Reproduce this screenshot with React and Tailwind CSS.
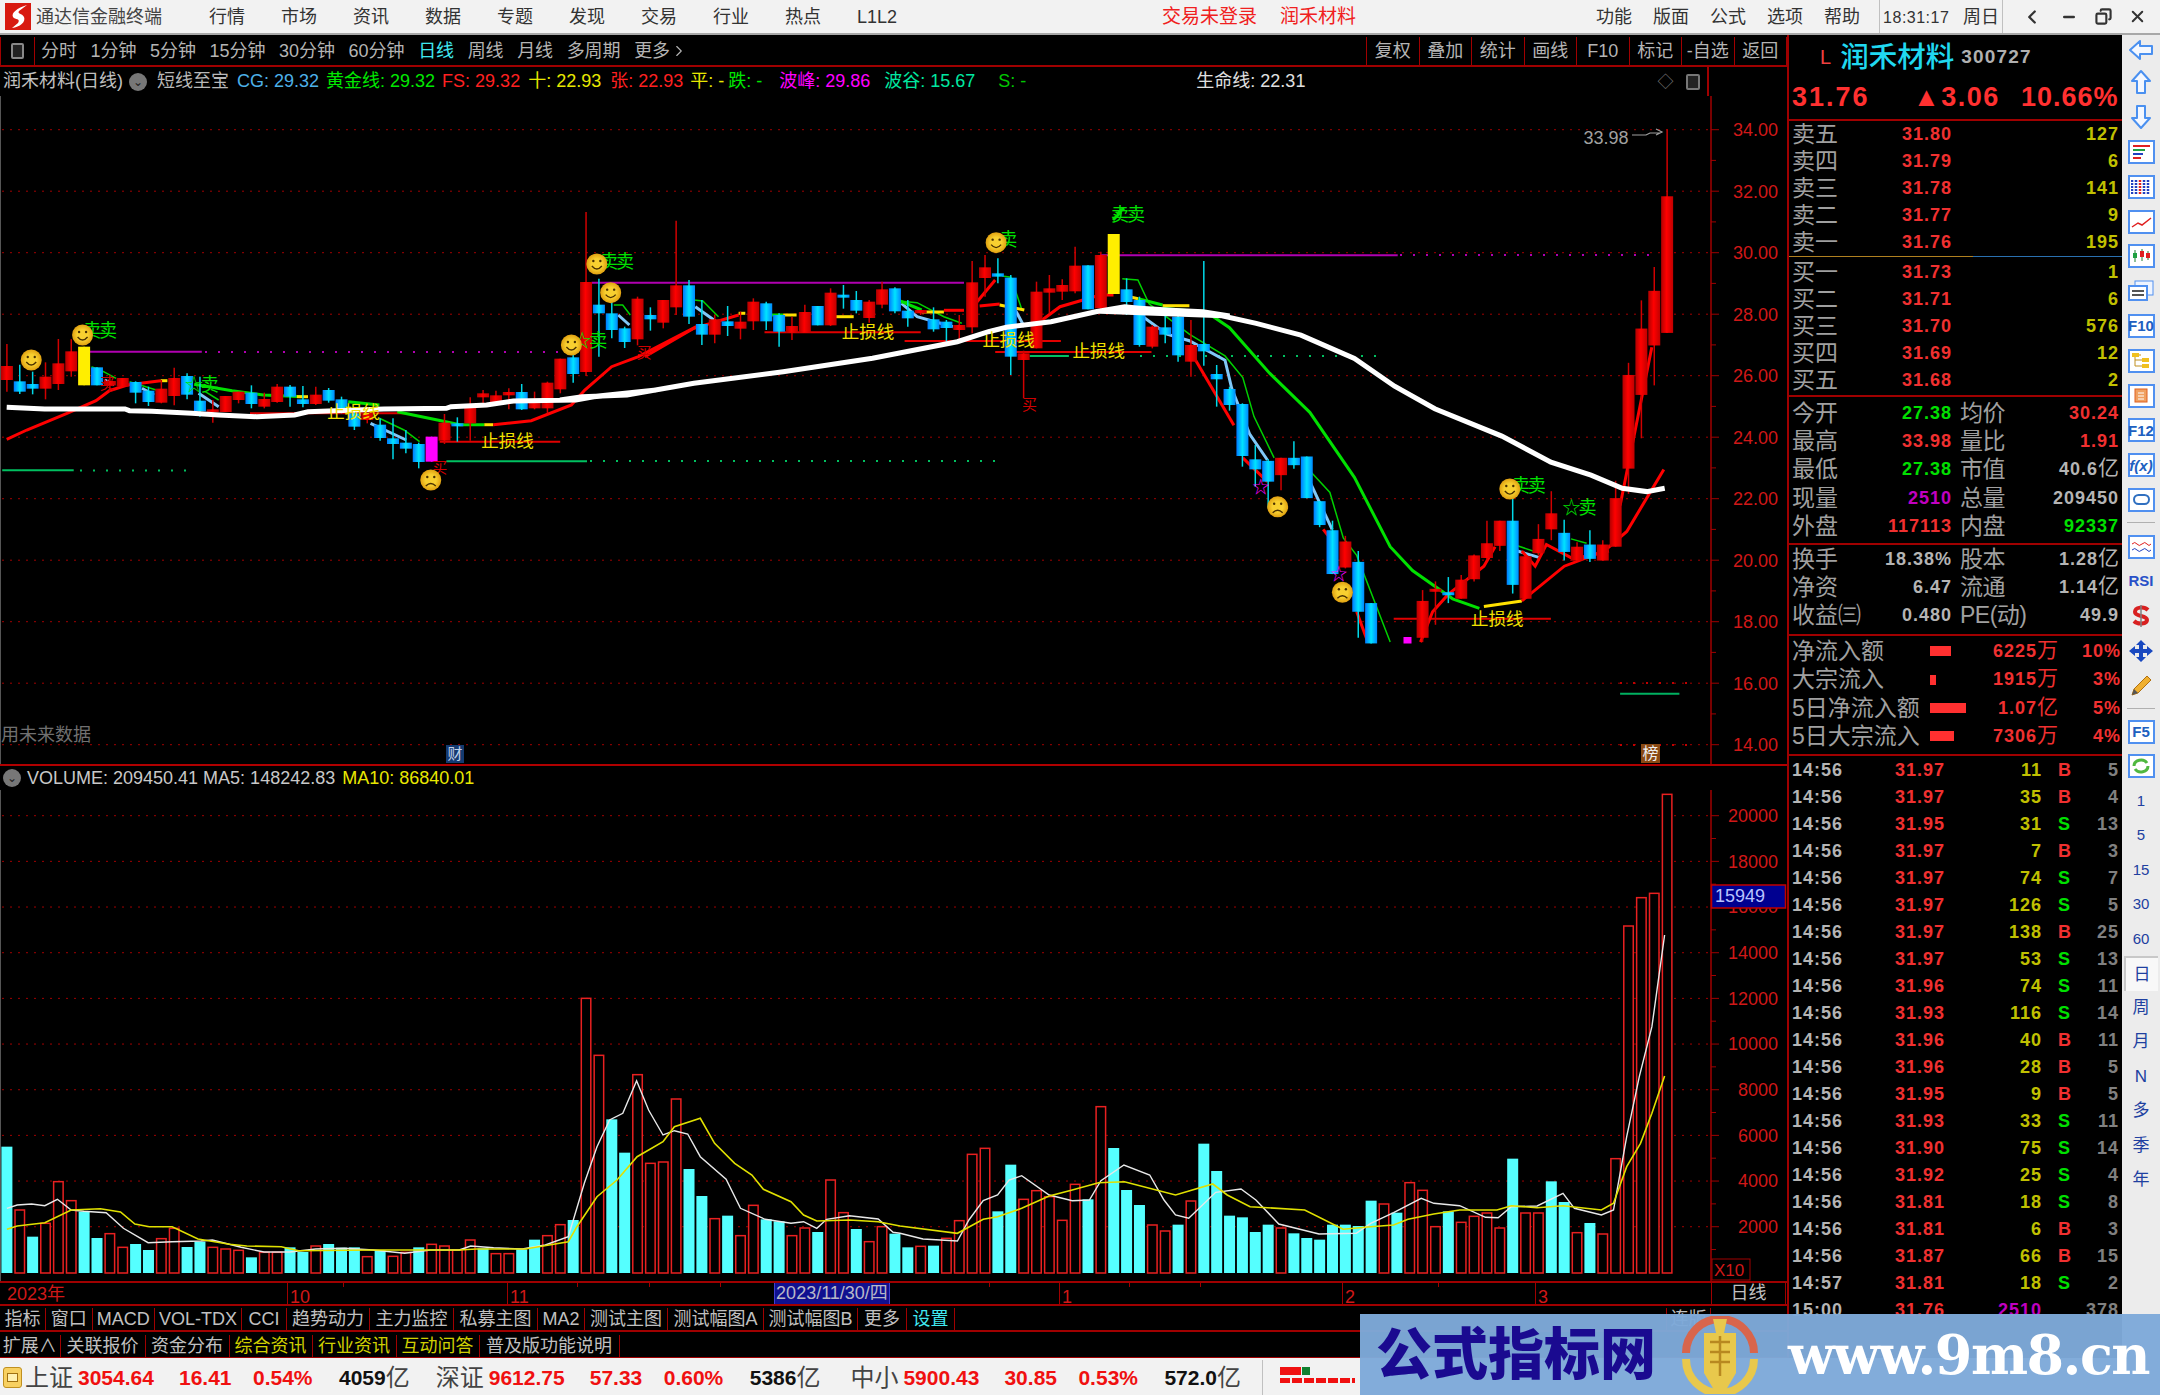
import { ChevronLeft, ChevronRight, Minus, X, Copy } from 'lucide-react';

// zoom-space helpers, the marks below were read off crops of the chart
const z3 = (a) => a.map(([x, y]) => [x * 0.4464, 200 + y / 3]);
const z4 = (a) => a.map(([x, y]) => [560 + x * 0.4464, 200 + y / 3]);
const z5 = (a) => a.map(([x, y]) => [1100 + x * 0.4464, 100 + y * 0.4337]);
const zv1 = (a) => a.map(([x, y]) => [x * 0.574, 760 + y / 3]);
const zv2 = (a) => a.map(([x, y]) => [900 + x * 0.574, 760 + y / 3]);
const pts = (a) => a.map((p) => p.map((n) => n.toFixed(1)).join(',')).join(' ');
const xOf = (i) => 6.9 + 12.87 * i;

const candles = [
  [498, 540, 432, 575, 'r'], [544, 575, 494, 582, 'b'], [552, 566, 515, 583, 'b'], [530, 566, 487, 598, 'r'],
  [490, 552, 417, 570, 'r'], [454, 514, 418, 530, 'r'], [440, 556, 440, 556, 'y'], [502, 556, 502, 556, 'b'],
  [543, 556, 525, 575, 'r'], [534, 560, 534, 560, 'r'], [546, 578, 544, 610, 'b'], [572, 606, 560, 618, 'b'],
  [566, 608, 540, 610, 'r'], [534, 588, 503, 616, 'r'], [528, 584, 520, 598, 'b'], [602, 634, 530, 650, 'b'],
  [628, 636, 600, 668, 'r'], [588, 636, 588, 636, 'r'], [575, 600, 575, 610, 'r'], [578, 612, 556, 625, 'b'],
  [597, 620, 578, 625, 'r'], [560, 606, 552, 608, 'r'], [560, 590, 555, 620, 'b'], [598, 612, 558, 622, 'b'],
  [584, 612, 560, 615, 'r'], [570, 602, 564, 608, 'b'], [598, 630, 590, 640, 'b'], [640, 680, 630, 690, 'b'],
  [640, 660, 640, 670, 'r'], [674, 714, 655, 722, 'b'], [715, 732, 655, 778, 'b'], [728, 746, 690, 760, 'b'],
  [732, 786, 728, 805, 'b'], [710, 785, 710, 785, 'm'], [668, 722, 642, 732, 'r'], [670, 678, 652, 725, 'b'],
  [614, 670, 592, 722, 'r'], [580, 592, 570, 620, 'r'], [586, 606, 572, 612, 'r'], [576, 586, 565, 628, 'r'],
  [576, 628, 552, 630, 'b'], [600, 625, 575, 628, 'r'], [548, 625, 545, 640, 'r'], [476, 568, 476, 580, 'r'],
  [472, 522, 434, 548, 'b'], [246, 516, 36, 528, 'r'], [314, 340, 236, 470, 'b'], [340, 390, 300, 415, 'b'],
  [385, 426, 380, 444, 'b'], [296, 418, 290, 436, 'r'], [345, 358, 322, 392, 'b'], [300, 368, 300, 385, 'r'],
  [256, 322, 62, 345, 'r'], [256, 350, 240, 372, 'b'], [372, 404, 300, 435, 'b'], [358, 404, 345, 430, 'r'],
  [364, 378, 318, 408, 'b'], [365, 386, 335, 418, 'r'], [305, 364, 295, 390, 'r'], [310, 364, 305, 390, 'b'],
  [345, 395, 340, 440, 'b'], [378, 398, 350, 420, 'r'], [336, 398, 314, 398, 'r'], [318, 376, 318, 376, 'b'],
  [278, 376, 265, 378, 'r'], [284, 290, 255, 326, 'b'], [300, 332, 273, 340, 'b'], [305, 354, 300, 368, 'r'],
  [268, 314, 245, 325, 'r'], [265, 334, 262, 340, 'b'], [332, 355, 300, 380, 'b'], [330, 340, 330, 345, 'r'],
  [358, 388, 322, 395, 'b'], [365, 384, 360, 425, 'b'], [375, 390, 345, 420, 'r'], [247, 382, 183, 400, 'r'],
  [202, 234, 165, 290, 'r'], [220, 230, 175, 250, 'b'], [233, 470, 225, 525, 'b'], [460, 480, 452, 595, 'r'],
  [275, 445, 245, 445, 'r'], [265, 278, 225, 340, 'r'], [255, 275, 238, 300, 'r'], [197, 274, 140, 280, 'r'],
  [196, 328, 196, 328, 'b'], [165, 325, 155, 330, 'r'], [102, 282, 102, 282, 'y'], [268, 306, 235, 345, 'b'],
  [300, 435, 290, 440, 'b'], [380, 440, 375, 445, 'r'], [382, 404, 335, 430, 'b'], [350, 466, 345, 485, 'b'],
  [435, 485, 360, 530, 'r'], [432, 454, 183, 497, 'b'], [522, 538, 495, 620, 'b'], [567, 615, 560, 632, 'b'],
  [612, 768, 610, 800, 'b'], [778, 808, 735, 860, 'b'],
].map(([t, b, wt, wb, c]) => [200 + t / 3, 200 + b / 3, 200 + wt / 3, 200 + wb / 3, c]);

const candlesLate = [
  [98, 832, 880, 828, 940, 'b'], [99, 825, 865, 825, 900, 'r'], [100, 825, 842, 787, 850, 'b'], [101, 822, 918, 822, 918, 'b'],
  [102, 925, 980, 925, 985, 'b'], [103, 992, 1093, 970, 1093, 'b'], [104, 1018, 1078, 1005, 1080, 'r'], [105, 1065, 1180, 1040, 1240, 'b'],
  [106, 1160, 1253, 1160, 1253, 'b'], [110, 1155, 1240, 1130, 1250, 'r'], [111, 1127, 1131, 1110, 1210, 'r'],
  [112, 1135, 1142, 1100, 1160, 'b'], [113, 1106, 1150, 1095, 1150, 'r'], [114, 1050, 1105, 1048, 1110, 'r'], [115, 1022, 1056, 970, 1060, 'r'],
  [116, 970, 1028, 970, 1040, 'r'], [117, 970, 1118, 920, 1138, 'b'], [118, 1052, 1150, 1052, 1150, 'r'], [119, 1012, 1045, 978, 1050, 'r'],
  [120, 953, 990, 902, 1015, 'r'], [121, 998, 1042, 968, 1062, 'b'], [122, 1030, 1062, 1020, 1062, 'r'], [123, 1025, 1058, 992, 1065, 'b'],
  [124, 1025, 1062, 1015, 1062, 'r'], [125, 918, 1030, 878, 1030, 'r'], [126, 634, 850, 606, 908, 'r'], [127, 527, 680, 462, 780, 'r'],
  [128, 440, 566, 385, 658, 'r'], [129, 222, 537, 68, 537, 'r'],
].map(([i, t, b, wt, wb, c]) => [i, 100 + t * 0.4337, 100 + b * 0.4337, 100 + wt * 0.4337, 100 + wb * 0.4337, c]);

const volumes = [
  [1160, 'c'], [1350, 'r'], [1430, 'c'], [1390, 'r'], [1265, 'r'], [1322, 'r'], [1355, 'c'], [1434, 'c'], [1421, 'r'], [1462, 'r'],
  [1452, 'c'], [1470, 'c'], [1436, 'r'], [1405, 'r'], [1461, 'c'], [1445, 'c'], [1462, 'r'], [1467, 'r'], [1471, 'r'], [1492, 'c'],
  [1477, 'r'], [1477, 'r'], [1462, 'c'], [1476, 'c'], [1458, 'r'], [1452, 'c'], [1463, 'c'], [1462, 'c'], [1490, 'r'], [1471, 'c'],
  [1489, 'r'], [1477, 'r'], [1462, 'c'], [1453, 'r'], [1458, 'r'], [1470, 'r'], [1440, 'r'], [1465, 'c'], [1481, 'r'], [1481, 'r'],
  [1468, 'c'], [1439, 'c'], [1427, 'r'], [1394, 'r'], [1380, 'c'], [715, 'r'], [886, 'r'], [1078, 'c'], [1178, 'c'], [944, 'r'],
  [1210, 'r'], [1206, 'r'], [1017, 'r'], [1227, 'c'], [1308, 'c'], [1376, 'r'], [1367, 'c'], [1427, 'r'], [1336, 'r'], [1378, 'c'],
  [1384, 'c'], [1427, 'r'], [1404, 'r'], [1416, 'c'], [1260, 'r'], [1358, 'r'], [1407, 'c'], [1445, 'r'], [1400, 'r'], [1421, 'c'],
  [1462, 'c'], [1459, 'r'], [1457, 'c'], [1435, 'r'], [1382, 'r'], [1183, 'r'], [1165, 'r'], [1354, 'c'], [1214, 'c'], [1318, 'r'],
  [1292, 'r'], [1310, 'r'], [1381, 'r'], [1273, 'r'], [1318, 'c'], [1040, 'r'], [1164, 'c'], [1290, 'c'], [1335, 'c'], [1395, 'r'],
  [1413, 'r'], [1394, 'c'], [1323, 'r'], [1151, 'c'], [1233, 'c'], [1367, 'c'], [1372, 'c'], [1416, 'c'], [1394, 'c'], [1404, 'r'],
  [1420, 'c'], [1434, 'c'], [1439, 'c'], [1394, 'c'], [1394, 'c'], [1398, 'c'], [1322, 'c'], [1332, 'r'], [1358, 'c'], [1268, 'r'],
  [1291, 'r'], [1400, 'r'], [1354, 'c'], [1387, 'r'], [1369, 'r'], [1359, 'r'], [1404, 'r'], [1196, 'c'], [1359, 'r'], [1359, 'r'],
  [1264, 'c'], [1326, 'c'], [1418, 'r'], [1389, 'c'], [1422, 'r'], [1196, 'r'], [498, 'r'], [413, 'r'], [400, 'r'], [103, 'r'],
];

const lifeLine = [
  ...z3([[15, 622], [100, 627], [280, 627], [290, 632], [340, 634], [430, 640], [490, 645], [575, 650], [660, 645], [690, 635], [860, 627], [1000, 625], [1010, 620], [1090, 615], [1150, 603], [1290, 600], [1330, 590], [1400, 582], [1470, 570]]),
  ...z4([[0, 600], [50, 590], [150, 585], [300, 550], [500, 515], [700, 475], [890, 425], [960, 395], [1000, 382], [1100, 365], [1200, 335], [1265, 320], [1320, 328], [1440, 335], [1500, 348]]),
  ...z5([[0, 487], [55, 478], [240, 490], [350, 515], [450, 542], [570, 596], [660, 660], [750, 712], [900, 775], [1010, 835], [1100, 865], [1170, 895], [1225, 903], [1265, 895]]),
];

const trend = [
  ['#ff0000', z3([[15, 718], [60, 690], [150, 640], [215, 602], [245, 572], [285, 555], [315, 550], [360, 542]])],
  ['#ffe000', z3([[360, 542], [375, 542]])],
  ['#00e000', z3([[435, 553], [520, 572], [590, 585], [680, 590]])],
  ['#ffe000', z3([[665, 590], [690, 590]])],
  ['#00e000', z3([[780, 605], [850, 615]])],
  ['#00e000', z3([[890, 635], [980, 660], [1030, 674], [1085, 674]])],
  ['#ffe000', z3([[1085, 674], [1105, 674]])],
  ['#ff0000', z3([[1105, 674], [1190, 662], [1280, 615], [1310, 570], [1370, 500], [1430, 470], [1560, 380]])],
  ['#ff0000', z4([[190, 470], [300, 385], [400, 345]])],
  ['#ffe000', z4([[400, 340], [415, 340]])],
  ['#00e000', z4([[475, 345], [500, 345]])],
  ['#ffe000', z4([[500, 345], [530, 345]])],
  ['#ffe000', z4([[618, 350], [658, 350]])],
  ['#00e000', z4([[760, 302], [810, 330]])],
  ['#ffe000', z4([[810, 336], [860, 336]])],
  ['#ff0000', z4([[860, 331], [905, 331]])],
  ['#ff0000', z4([[925, 320], [975, 240]])],
  ['#ff0000', z4([[940, 318], [985, 312]])],
  ['#ffe000', z4([[985, 315], [1040, 330]])],
  ['#ff0000', z4([[1080, 360], [1120, 320], [1210, 285], [1240, 285]])],
  ['#ffe000', z4([[1275, 290], [1295, 296]])],
  ['#00e000', z4([[1295, 296], [1350, 315]])],
  ['#ffe000', z4([[1350, 317], [1410, 317]])],
  ['#00e000', z5([[140, 480], [240, 490], [290, 525], [380, 630], [470, 720], [570, 870], [650, 1030], [700, 1085], [790, 1150], [850, 1172]])],
  ['#ffe000', z5([[860, 1168], [945, 1155]])],
  ['#ff0000', z5([[945, 1155], [1040, 1075], [1130, 1040], [1180, 995], [1263, 852]])],
  ['#ff0000', z5([[1140, 1040], [1060, 1058], [1000, 1025], [975, 1075], [945, 1040]])],
  ['#ff0000', z5([[718, 1250], [745, 1180], [780, 1140], [860, 1075], [885, 1030]])],
  ['#ff0000', z5([[1165, 935], [1207, 720], [1236, 570]])],
];

const thinGreen = [
  z3([[205, 500], [232, 515], [260, 535]]), z3([[290, 545], [350, 570]]), z3([[460, 575], [490, 600]]), z3([[850, 655], [905, 690], [940, 725]]),
  z3([[1375, 315], [1395, 315], [1412, 345]]), z4([[300, 300], [320, 303], [355, 350]]), z4([[760, 303], [800, 308], [860, 350], [900, 370]]),
  z4([[990, 228], [1010, 232], [1035, 330]]), z5([[50, 412], [85, 415], [110, 470], [200, 540], [280, 590], [320, 640], [345, 730], [390, 825]]),
  z5([[470, 855], [515, 905], [545, 1010], [575, 1050], [650, 1250]]), z5([[935, 1028], [985, 1045]]), z5([[1055, 1012], [1090, 1022]]),
];

const thinBlue = [
  z3([[235, 540], [255, 555]]), z3([[318, 565], [345, 585]]), z3([[445, 580], [490, 620]]), z3([[830, 670], [910, 720]]),
  z3([[1385, 345], [1410, 375]]), z4([[303, 320], [355, 370]]), z4([[765, 310], [800, 350], [880, 380]]), z4([[1020, 330], [1040, 380]]),
  z5([[70, 480], [150, 540], [200, 555], [280, 600], [295, 665], [335, 770], [375, 830]]), z5([[470, 880], [520, 990]]), z5([[935, 1040], [985, 1055]]),
];

const thinRed = [z5([[200, 575], [300, 750]]), z5([[320, 825], [375, 880]]), z5([[500, 990], [530, 1030]]), z5([[575, 1180], [600, 1250]])];

const hLines = [
  ['#b000b0', 2, z3([[200, 455], [452, 455]])],
  ['#b000b0', 2, [[z3([[1325, 248]])[0][0], 282.7], [z4([[905, 248]])[0][0], 282.7]]],
  ['#b000b0', 2, z5([[0, 358], [667, 358]])],
  ['#00c060', 2, z3([[5, 811], [165, 811]])],
  ['#00c060', 2, z3([[1000, 784], [1315, 784]])],
  ['#00c060', 2, z4([[1052, 468], [1140, 468]])],
  ['#00b060', 2, z5([[1165, 1369], [1298, 1369]])],
  ['#e00000', 2, z3([[985, 725], [1255, 725]])],
  ['#e00000', 2, z3([[560, 640], [910, 640]])],
  ['#e00000', 2, z4([[458, 397], [808, 397]])],
  ['#e00000', 2, z4([[772, 423], [1122, 423]])],
  ['#e00000', 2, z4([[975, 456], [1325, 456]])],
  ['#e00000', 2, z5([[658, 1196], [1010, 1196]])],
];

const dotLines = [
  ['#b000b0', 205, 565, 352],
  ['#b000b0', 1400, 1655, 255],
  ['#00c060', 80, 190, 470.5],
  ['#00c060', 590, 1000, 461],
  ['#00c060', 1140, 1385, 356],
  ['#c00000', 1620, 1690, 683],
  ['#c00000', 1620, 1690, 745],
];

const stopLabels = [...z3([[792, 655], [1137, 741]]), ...z4([[690, 413], [1005, 439], [1207, 472]]), ...z5([[890, 1211]])];
const happy = [...z3([[70, 480], [185, 405], [1280, 435], [1337, 192], [1368, 278]]), ...z4([[977, 128]]), ...z5([[918, 897]])];
const sad = [...z3([[965, 840]]), ...z5([[398, 938], [543, 1135]])];
const sellLabels = [
  ['卖卖', ...z3([[222, 410]])[0]], ['卖卖', ...z3([[1380, 205]])[0]], ['☆卖', ...z3([[1320, 442]])[0]], ['☆卖', ...z3([[450, 572]])[0]],
  ['卖', ...z4([[1002, 137]])[0]], ['卖卖', ...z4([[1270, 62]])[0]], ['卖卖', ...z5([[958, 903]])[0]], ['☆卖', ...z5([[1072, 955]])[0]],
];
const buyLabels = [...z3([[240, 568], [985, 818], [1443, 475]]), ...z4([[1052, 630]])];

const wma1 = zv1([[12, 1345], [30, 1335], [55, 1332], [78, 1337], [100, 1318], [124, 1350], [146, 1354], [185, 1358], [215, 1405], [258, 1448], [300, 1445], [350, 1443], [370, 1440], [420, 1462], [460, 1476], [505, 1476], [550, 1467], [600, 1465], [650, 1470], [705, 1480], [750, 1470], [800, 1470], [820, 1458], [860, 1463], [910, 1467], [950, 1455], [990, 1430], [1018, 1270], [1040, 1160], [1062, 1080], [1085, 1060], [1109, 962], [1130, 1050], [1155, 1125], [1175, 1112], [1198, 1122], [1220, 1190], [1265, 1258], [1290, 1345], [1333, 1378], [1378, 1390], [1400, 1385], [1423, 1405], [1440, 1378], [1480, 1367], [1530, 1377], [1556, 1417]]);
const wma2 = zv2([[0, 1420], [40, 1437], [100, 1443], [120, 1380], [145, 1322], [170, 1305], [190, 1260], [212, 1247], [260, 1305], [300, 1322], [330, 1320], [350, 1262], [390, 1215], [435, 1245], [460, 1320], [480, 1365], [503, 1375], [550, 1297], [594, 1287], [620, 1320], [660, 1392], [730, 1422], [795, 1420], [820, 1390], [860, 1358], [908, 1315], [930, 1330], [975, 1337], [1020, 1372], [1042, 1373], [1065, 1340], [1110, 1338], [1155, 1300], [1175, 1345], [1222, 1365], [1243, 1350], [1266, 1130], [1288, 950], [1310, 800], [1332, 525]]);
const yma1 = zv1([[12, 1408], [30, 1398], [78, 1388], [124, 1350], [175, 1346], [210, 1356], [235, 1392], [260, 1400], [300, 1400], [345, 1437], [400, 1453], [430, 1458], [490, 1460], [520, 1472], [650, 1470], [800, 1470], [830, 1467], [915, 1467], [990, 1445], [1005, 1400], [1040, 1310], [1075, 1260], [1110, 1190], [1155, 1145], [1175, 1100], [1220, 1075], [1245, 1150], [1280, 1210], [1310, 1245], [1330, 1288], [1378, 1325], [1400, 1365], [1423, 1383], [1480, 1380], [1530, 1385]]);
const yma2 = zv2([[0, 1398], [100, 1420], [145, 1378], [170, 1370], [212, 1345], [260, 1308], [300, 1290], [346, 1268], [391, 1265], [480, 1305], [545, 1272], [570, 1305], [610, 1340], [705, 1350], [772, 1408], [820, 1400], [860, 1395], [885, 1378], [930, 1362], [975, 1350], [1040, 1350], [1065, 1337], [1110, 1343], [1155, 1337], [1222, 1350], [1243, 1330], [1266, 1220], [1290, 1150], [1310, 1060], [1332, 948]]);

const Candle = ({ x, t, b, wt, wb, c }) => {
  const fill = { r: 'url(#upBody)', b: 'url(#downBody)', y: '#ffee00', m: '#ff00ff' }[c];
  const wick = c === 'r' ? '#d00000' : c === 'b' ? '#00d8e8' : fill;
  return (
    <g>
      <line x1={x} x2={x} y1={wt} y2={wb} stroke={wick} strokeWidth="1.5" />
      <rect x={x - 6} y={t} width="12" height={Math.max(b - t, 3)} fill={fill} />
    </g>
  );
};

const Face = ({ x, y, sad: isSad }) => (
  <g transform={`translate(${x} ${y})`}>
    <circle r="10.5" fill="url(#face)" />
    <circle cx="-3.5" cy="-3" r="1.2" fill="#4a3000" />
    <circle cx="3.5" cy="-3" r="1.2" fill="#4a3000" />
    <path d={isSad ? 'M-5 6 Q0 1 5 6' : 'M-5 2 Q0 8 5 2'} fill="none" stroke="#4a3000" strokeWidth="1.3" />
  </g>
);

const PriceChart = () => {
  const prices = [34, 32, 30, 28, 26, 24, 22, 20, 18, 16, 14];
  return (
    <svg className="block" width="1787" height="668" viewBox="0 96 1787 668">
      <defs>
        <linearGradient id="upBody">
          <stop offset="0" stopColor="#b00000" />
          <stop offset="0.45" stopColor="#ff0000" />
          <stop offset="1" stopColor="#c00000" />
        </linearGradient>
        <linearGradient id="downBody">
          <stop offset="0" stopColor="#0078ff" />
          <stop offset="0.5" stopColor="#00e4ff" />
          <stop offset="1" stopColor="#0088ff" />
        </linearGradient>
        <radialGradient id="face">
          <stop offset="0.5" stopColor="#f8d030" />
          <stop offset="1" stopColor="#e0a010" />
        </radialGradient>
      </defs>
      <line x1="0.5" x2="0.5" y1="96" y2="764" stroke="#555" />
      {prices.map((p, i) => (
        <line key={p} x1="2" x2="1711" y1={129.7 + i * 61.5} y2={129.7 + i * 61.5} stroke="#a00000" strokeDasharray="2 6" />
      ))}
      {dotLines.map(([col, a, b, y], i) => (
        <line key={i} x1={a} x2={b} y1={y} y2={y} stroke={col} strokeWidth="2" strokeDasharray="2 11" />
      ))}
      {hLines.map(([col, w, p], i) => (
        <polyline key={i} points={pts(p)} fill="none" stroke={col} strokeWidth={w} />
      ))}
      {thinGreen.map((p, i) => (
        <polyline key={i} points={pts(p)} fill="none" stroke="#00d000" strokeWidth="1.5" />
      ))}
      {thinRed.map((p, i) => (
        <polyline key={i} points={pts(p)} fill="none" stroke="#ff0000" strokeWidth="3" />
      ))}
      {thinBlue.map((p, i) => (
        <polyline key={i} points={pts(p)} fill="none" stroke="#80c8f8" strokeWidth="3" />
      ))}
      {trend.map(([col, p], i) => (
        <polyline key={i} points={pts(p)} fill="none" stroke={col} strokeWidth="3" />
      ))}
      {candles.map(([t, b, wt, wb, c], i) => (
        <Candle key={i} x={xOf(i)} t={t} b={b} wt={wt} wb={wb} c={c} />
      ))}
      {candlesLate.map(([i, t, b, wt, wb, c]) => (
        <Candle key={i} x={xOf(i)} t={t} b={b} wt={wt} wb={wb} c={c} />
      ))}
      <rect x="1403.5" y="637" width="8" height="6.5" fill="#ff00ff" />
      <polyline points={pts(lifeLine)} fill="none" stroke="#ffffff" strokeWidth="5" />
      {stopLabels.map(([x, y], i) => (
        <text key={i} x={x} y={y} fill="#f0e000" fontSize="17.5" textAnchor="middle">止损线</text>
      ))}
      {sellLabels.map(([s, x, y], i) => (
        <text key={i} x={x} y={y} fill="#00e000" fontSize="18" letterSpacing="-2" textAnchor="middle">{s}</text>
      ))}
      {buyLabels.map(([x, y], i) => (
        <text key={i} x={x} y={y} fill="#d00000" fontSize="15" textAnchor="middle">买</text>
      ))}
      {z5([[360, 893], [535, 1092]]).map(([x, y], i) => (
        <text key={i} x={x} y={y + 6} fill="#ff00ff" fontSize="17" textAnchor="middle">☆</text>
      ))}
      {happy.map(([x, y], i) => <Face key={i} x={x} y={y} />)}
      {sad.map(([x, y], i) => <Face key={i} x={x} y={y} sad />)}
      <path d="M1117 214 l7 -6 M1113 220 l8 -8" stroke="#00e000" strokeWidth="3" />
      <text x="1606" y="144" fill="#a0a0a0" fontSize="18" textAnchor="middle">33.98</text>
      <path d="M1632 135 h14 l4 -2 h10 M1656 129 l6 3 l-6 3" fill="none" stroke="#a0a0a0" strokeWidth="1.2" />
      <text x="1" y="741" fill="#707070" fontSize="18">用未来数据</text>
      <rect x="446" y="745" width="18" height="18" fill="#143a70" />
      <text x="455" y="759" fill="#c0d0e8" fontSize="15" textAnchor="middle">财</text>
      <rect x="1641" y="744" width="19" height="19" fill="#8a4a14" />
      <text x="1650.5" y="759" fill="#f0f0f0" fontSize="16" textAnchor="middle">榜</text>
      <line x1="1711" x2="1711" y1="96" y2="764" stroke="#a00000" strokeWidth="1.5" />
      {prices.map((p, i) => (
        <g key={p}>
          <line x1="1711" x2="1719" y1={129.7 + i * 61.5} y2={129.7 + i * 61.5} stroke="#a00000" />
          {i < 10 && <line x1="1711" x2="1716" y1={160.4 + i * 61.5} y2={160.4 + i * 61.5} stroke="#a00000" />}
          <text x="1778" y={136 + i * 61.5} fill="#d01818" fontSize="18" textAnchor="end">{p.toFixed(2)}</text>
        </g>
      ))}
    </svg>
  );
};

const VolumeChart = () => {
  const levels = [20000, 18000, 16000, 14000, 12000, 10000, 8000, 6000, 4000, 2000];
  return (
    <svg className="block" width="1787" height="491" viewBox="0 790 1787 491">
      <line x1="0.5" x2="0.5" y1="790" y2="1281" stroke="#555" />
      {levels.map((v, i) => (
        <line key={v} x1="2" x2="1711" y1={815.7 + i * 45.67} y2={815.7 + i * 45.67} stroke="#a00000" strokeDasharray="2 6" />
      ))}
      {volumes.map(([top, c], i) => {
        const y = 760 + top / 3;
        const x = xOf(i);
        return c === 'c' ? (
          <rect key={i} x={x - 5.5} y={y} width="11" height={1273 - y} fill="#55ffff" />
        ) : (
          <rect key={i} x={x - 4.75} y={y} width="9.5" height={1273 - y} fill="#000" stroke="#e82020" strokeWidth="1.5" />
        );
      })}
      <polyline points={pts([...wma1, ...wma2])} fill="none" stroke="#e8e8e8" strokeWidth="1.4" />
      <polyline points={pts([...yma1, ...yma2])} fill="none" stroke="#e0e000" strokeWidth="1.6" />
      <line x1="1711" x2="1711" y1="790" y2="1281" stroke="#a00000" strokeWidth="1.5" />
      {levels.map((v, i) => (
        <g key={v}>
          <line x1="1711" x2="1719" y1={815.7 + i * 45.67} y2={815.7 + i * 45.67} stroke="#a00000" />
          <line x1="1711" x2="1716" y1={838.5 + i * 45.67} y2={838.5 + i * 45.67} stroke="#a00000" />
          <text x="1778" y={822 + i * 45.67} fill="#d01818" fontSize="18" textAnchor="end">{v}</text>
        </g>
      ))}
      <rect x="1711.5" y="885" width="74" height="23" fill="#000090" stroke="#c00000" strokeWidth="1.5" />
      <text x="1715" y="902" fill="#b8c4ff" fontSize="18">15949</text>
      <rect x="1712" y="1259" width="38" height="21" fill="#000" stroke="#a00000" />
      <text x="1714" y="1276" fill="#d01818" fontSize="17">X10</text>
    </svg>
  );
};

const TitleBar = () => (
  <div className="flex h-[35px] items-center border-b-2 border-[#a8a8a8] bg-[#f2f2f2] pl-[5px] text-[18px] text-[#333]">
    <svg width="26" height="27" viewBox="0 0 26 27">
      <rect width="26" height="27" fill="#d81a10" />
      <path d="M22 2 C12 5 6 10 8 14 C10 17 16 15 13 20 L7 25 C15 24 21 19 19 14 C17 10 12 11 14 8 Z" fill="#fff" />
    </svg>
    <span className="ml-[5px] pt-[2px] text-[#444]">通达信金融终端</span>
    <div className="ml-[47px] flex gap-[36px] pt-[2px]">
      {['行情', '市场', '资讯', '数据', '专题', '发现', '交易', '行业', '热点', 'L1L2'].map((m) => (
        <span key={m}>{m}</span>
      ))}
    </div>
    <span className="ml-[265px] pt-[2px] text-[19px] text-[#f02020]">交易未登录</span>
    <span className="ml-[23px] pt-[2px] text-[19px] text-[#f02020]">润禾材料</span>
    <div className="ml-[240px] flex gap-[21px] pt-[2px]">
      {['功能', '版面', '公式', '选项', '帮助'].map((m) => (
        <span key={m}>{m}</span>
      ))}
    </div>
    <div className="ml-[19px] flex h-full items-center border-x border-[#c0c0c0] pl-[3px] pr-[3px] pt-[2px]">
      <span className="w-[80px] text-[16px] tracking-[0.5px]">18:31:17</span>
      <span className="text-[18px]">周日</span>
    </div>
    <ChevronLeft className="ml-[18px] text-[#333]" size={22} strokeWidth={2.5} />
    <Minus className="ml-[18px] text-[#333]" size={16} strokeWidth={4} />
    <Copy className="ml-[18px] scale-x-[-1] text-[#333]" size={17} strokeWidth={3} />
    <X className="ml-[16px] text-[#333]" size={19} strokeWidth={2.5} />
  </div>
);

const ToolBar = () => (
  <div className="flex h-[32px] items-center border-b-2 border-[#a00000] pt-[2px] text-[18px] text-[#b4b4b4]">
    <div className="flex h-full w-[35px] items-center justify-center border-x border-[#a00000]">
      <div className="h-[16px] w-[13px] rounded-[2px] border-2 border-[#888] bg-[#222]" />
    </div>
    <div className="ml-[6px] flex gap-[13.5px] whitespace-nowrap">
      <span>分时</span>
      <span>1分钟</span>
      <span>5分钟</span>
      <span>15分钟</span>
      <span>30分钟</span>
      <span>60分钟</span>
      <span className="text-[#40e8f0]">日线</span>
      <span>周线</span>
      <span>月线</span>
      <span>多周期</span>
      <span className="flex items-center">更多<ChevronRight size={18} strokeWidth={1.5} /></span>
    </div>
    <div className="ml-auto flex h-full">
      {['复权', '叠加', '统计', '画线', 'F10', '标记', '-自选', '返回'].map((b) => (
        <div key={b} className="flex w-[52.5px] items-center justify-center border-l border-[#a00000] whitespace-nowrap">{b}</div>
      ))}
    </div>
    <div className="h-full w-px bg-[#a00000]" />
  </div>
);

const indicatorRow = [
  ['短线至宝', 'ml-[10px] text-[#b8b8b8]'],
  ['CG: 29.32', 'ml-[8px] text-[#4db0e8]'],
  ['黄金线: 29.32', 'ml-[7px] text-[#00e800]'],
  ['FS: 29.32', 'ml-[7px] text-[#ff2020]'],
  ['十: 22.93', 'ml-[8px] text-[#e8e800]'],
  ['张: 22.93', 'ml-[9px] text-[#ff2020]'],
  ['平: -', 'ml-[7px] text-[#e8e800]'],
  ['跌: -', 'ml-[4px] text-[#00e800]'],
  ['波峰: 29.86', 'ml-[17px] text-[#ff00ff]'],
  ['波谷: 15.67', 'ml-[14px] text-[#00e8a0]'],
  ['S: -', 'ml-[23px] text-[#00c800]'],
];

const InfoRow = () => (
  <div className="flex h-[29px] items-center whitespace-nowrap pl-[3px] text-[18px] text-[#c0c0c0]">
    <span>润禾材料(日线)</span>
    <span className="ml-[6px] flex h-[18px] w-[18px] items-center justify-center rounded-full bg-[#777] text-[12px] text-[#222]">⌄</span>
    {indicatorRow.map(([t, c]) => (
      <span key={t} className={c}>{t}</span>
    ))}
    <span className="ml-[170px] text-[#e0e0e0]">生命线: 22.31</span>
    <span className="ml-[352px] text-[16px] text-[#777]">◇</span>
    <div className="ml-[13px] h-[16px] w-[14px] rounded-[2px] border-2 border-[#777] bg-[#222]" />
    <div className="ml-[7px] h-full border-l-2 border-[#a00000]" />
  </div>
);

const dateTicks = ['left-[343px]', 'left-[577px]', 'left-[649px]', 'left-[720px]', 'left-[989px]', 'left-[1129px]', 'left-[1200px]', 'left-[1438px]'];

const DateStrip = () => (
  <div className="relative flex h-[25px] items-center border-y-2 border-[#a00000] text-[18px] text-[#d01818]">
    <span className="w-[287px] pl-[7px] pt-[2px]">2023年</span>
    <span className="h-full w-[220px] border-l border-[#a00000] pl-[2px] pt-[1px]">10</span>
    <span className="h-full w-[267px] border-l border-[#a00000] pl-[2px] pt-[1px]">11</span>
    <span className="flex h-full w-[116px] items-center justify-center border-x border-[#4040d0] bg-[#101090] text-[#b8b8c8]">2023/11/30/四</span>
    <span className="h-full w-[169px] pl-[169px]" />
    <span className="h-full w-[283px] border-l border-[#a00000] pl-[2px] pt-[1px]">1</span>
    <span className="h-full w-[193px] border-l border-[#a00000] pl-[2px] pt-[1px]">2</span>
    <span className="h-full w-[176px] border-l border-[#a00000] pl-[2px] pt-[1px]">3</span>
    <span className="flex h-full w-[75px] items-center justify-center border-x border-[#a00000] text-[#c0c0c0]">日线</span>
    {dateTicks.map((t) => (
      <span key={t} className={`absolute top-0 h-[4px] w-px bg-[#a00000] ${t}`} />
    ))}
  </div>
);

const tabsOne = [
  ['指标', 'w-[46px]'], ['窗口', 'w-[46.5px]'], ['MACD', 'w-[62.5px]'], ['VOL-TDX', 'w-[87px]'], ['CCI', 'w-[45px]'], ['趋势动力', 'w-[83px]'],
  ['主力监控', 'w-[84px]'], ['私募主图', 'w-[84px]'], ['MA2', 'w-[47px]'], ['测试主图', 'w-[83px]'], ['测试幅图A', 'w-[96px]'], ['测试幅图B', 'w-[94px]'],
  ['更多', 'w-[49px]'], ['设置', 'w-[48px] text-[#40e8f0]'],
];
const tabsTwo = [
  ['扩展∧', 'w-[60.5px]'], ['关联报价', 'w-[85px]'], ['资金分布', 'w-[84px]'], ['综合资讯', 'w-[83px] text-[#d0d000]'], ['行业资讯', 'w-[84px] text-[#d0d000]'],
  ['互动问答', 'w-[83px] text-[#d0d000]'], ['普及版功能说明', 'w-[140px]'],
];

const TabRow = ({ items, extra, className }) => (
  <div className={`flex items-center border-b-2 border-[#a00000] text-[18px] text-[#c0c0c0] ${className}`}>
    {items.map(([t, c]) => (
      <div key={t} className={`flex h-full shrink-0 items-center justify-center whitespace-nowrap border-r border-[#a00000] ${c}`}>{t}</div>
    ))}
    {extra}
  </div>
);

const Bold = ({ className = '', children }) => (
  <span className={`text-[18px] font-bold tracking-[1px] ${className}`}>{children}</span>
);

const sells = [['卖五', '31.80', '127'], ['卖四', '31.79', '6'], ['卖三', '31.78', '141'], ['卖二', '31.77', '9'], ['卖一', '31.76', '195']];
const buys = [['买一', '31.73', '1'], ['买二', '31.71', '6'], ['买三', '31.70', '576'], ['买四', '31.69', '12'], ['买五', '31.68', '2']];
const RED = 'text-[#f03030]';
const GREEN = 'text-[#00e000]';
const GRAY = 'text-[#b4b4b4]';

const QuoteRow = ({ label, price, qty }) => (
  <div className="flex h-[27px] items-center">
    <span className="w-[58px] pl-[3px] text-[23px] leading-none text-[#a0a0a0]">{label}</span>
    <Bold className={`w-[105px] text-right ${RED}`}>{price}</Bold>
    <Bold className="w-[167px] text-right text-[#c0c000]">{qty}</Bold>
  </div>
);

const stats = [
  ['今开', '27.38', GREEN, '均价', '30.24', RED], ['最高', '33.98', RED, '量比', '1.91', RED], ['最低', '27.38', GREEN, '市值', '40.6', GRAY, '亿'],
  ['现量', '2510', 'text-[#c000c0]', '总量', '209450', GRAY], ['外盘', '117113', RED, '内盘', '92337', GREEN],
];
const stats2 = [['换手', '18.38%', GRAY, '股本', '1.28', GRAY, '亿'], ['净资', '6.47', GRAY, '流通', '1.14', GRAY, '亿'], ['收益㈢', '0.480', GRAY, 'PE(动)', '49.9', GRAY]];

const StatRow = ({ row }) => {
  const [a, v, c, b, w, d, unit] = row;
  return (
    <div className="flex h-[28.4px] items-center whitespace-nowrap text-[#a0a0a0]">
      <span className="w-[58px] pl-[3px] text-[23px] leading-none">{a}</span>
      <Bold className={`w-[105px] text-right ${c}`}>{v}</Bold>
      <span className="ml-[8px] w-[50px] text-[23px] leading-none tracking-[-0.5px]">{b}</span>
      <span className={`w-[109px] text-right ${d}`}>
        <Bold>{w}</Bold>
        {unit && <span className="text-[21px] font-normal leading-none">{unit}</span>}
      </span>
    </div>
  );
};

const flows = [
  ['净流入额', 'w-[21px]', '6225', '万', '10%'], ['大宗流入', 'w-[6px]', '1915', '万', '3%'],
  ['5日净流入额', 'w-[36px]', '1.07', '亿', '5%'], ['5日大宗流入', 'w-[24px]', '7306', '万', '4%'],
];

const trades = [
  ['14:56', '31.97', '11', 'B', '5'], ['14:56', '31.97', '35', 'B', '4'], ['14:56', '31.95', '31', 'S', '13'], ['14:56', '31.97', '7', 'B', '3'],
  ['14:56', '31.97', '74', 'S', '7'], ['14:56', '31.97', '126', 'S', '5'], ['14:56', '31.97', '138', 'B', '25'], ['14:56', '31.97', '53', 'S', '13'],
  ['14:56', '31.96', '74', 'S', '11'], ['14:56', '31.93', '116', 'S', '14'], ['14:56', '31.96', '40', 'B', '11'], ['14:56', '31.96', '28', 'B', '5'],
  ['14:56', '31.95', '9', 'B', '5'], ['14:56', '31.93', '33', 'S', '11'], ['14:56', '31.90', '75', 'S', '14'], ['14:56', '31.92', '25', 'S', '4'],
  ['14:56', '31.81', '18', 'S', '8'], ['14:56', '31.81', '6', 'B', '3'], ['14:56', '31.87', '66', 'B', '15'], ['14:57', '31.81', '18', 'S', '2'],
  ['15:00', '31.76', '2510', '', '378'],
];

const Rule = () => <div className="h-[2px] bg-[#a00000]" />;

const QuotePanel = () => (
  <div className="w-[335px] shrink-0 overflow-hidden border-l-2 border-[#a00000]">
    <div className="flex h-[39px] items-center pt-[5px]">
      <span className="ml-[31px] text-[20px] text-[#f04040]">L</span>
      <span className="ml-[9px] text-[28.5px] font-medium leading-none text-[#20d8f0]">润禾材料</span>
      <span className="ml-[7px] text-[19px] font-bold tracking-[1.2px] text-[#b0b0b0]">300727</span>
    </div>
    <div className="flex h-[45px] items-center pt-[2px] font-bold text-[#ff3030]">
      <span className="ml-[3px] w-[121px] text-[27px] tracking-[2px]">31.76</span>
      <span className="w-[108px] whitespace-nowrap text-[27px] tracking-[1.5px]"><span className="text-[27px]">▲</span>3.06</span>
      <span className="text-[27px] tracking-[1px]">10.66%</span>
    </div>
    <Rule />
    {sells.map(([l, p, q]) => <QuoteRow key={l} label={l} price={p} qty={q} />)}
    <div className="flex h-px">
      <div className="w-[184px] bg-[#b08020]" />
      <div className="flex-1 bg-[#2a70b0]" />
    </div>
    <div className="h-[2px]" />
    {buys.map(([l, p, q]) => <QuoteRow key={l} label={l} price={p} qty={q} />)}
    <div className="h-px" />
    <Rule />
    <div className="h-[2px]" />
    {stats.map((r) => <StatRow key={r[0]} row={r} />)}
    <div className="h-[2px]" />
    <Rule />
    {stats2.map((r) => <StatRow key={r[0]} row={r} />)}
    <div className="h-[4px]" />
    <Rule />
    <div className="pt-px">
      {flows.map(([l, bar, v, u, pct]) => (
        <div key={l} className="flex h-[28.4px] items-center whitespace-nowrap">
          <span className="w-[141px] pl-[3px] text-[23px] leading-none text-[#a0a0a0]">{l}</span>
          <div className="w-[60px]"><div className={`h-[10px] bg-[#ff3030] ${bar}`} /></div>
          <span className={`w-[68px] text-right ${RED}`}>
            <Bold>{v}</Bold>
            <span className="text-[21px] leading-none">{u}</span>
          </span>
          <Bold className={`w-[63px] text-right ${RED}`}>{pct}</Bold>
        </div>
      ))}
    </div>
    <div className="h-[3px]" />
    <Rule />
    <div className="pt-[1px]">
      {trades.map(([t, p, q, s, n], i) => (
        <div key={i} className="flex h-[27px] items-center">
          <Bold className={`w-[106px] pl-[3px] ${GRAY}`}>{t}</Bold>
          <Bold className={`w-[62px] ${RED}`}>{p}</Bold>
          <Bold className={`w-[85px] text-right ${q === '2510' ? 'text-[#c000c0]' : 'text-[#c0c000]'}`}>{q}</Bold>
          <Bold className={`ml-[16px] w-[22px] ${s === 'B' ? 'text-[#f03030]' : GREEN}`}>{s}</Bold>
          <Bold className="w-[39px] text-right text-[#808080]">{n}</Bold>
        </div>
      ))}
    </div>
  </div>
);

const ArrowIcon = ({ rotate }) => (
  <svg width="26" height="24" viewBox="0 0 26 24" className={rotate}>
    <path d="M2 12 L12 3 V8 H24 V16 H12 V21 Z" fill="#f4f8ff" stroke="#4a90f0" strokeWidth="2" strokeLinejoin="round" />
  </svg>
);

const IconBox = ({ children }) => (
  <div className="flex h-[24px] w-[27px] items-center justify-center border-2 border-[#5090f0] bg-white">{children}</div>
);

const Bars = ({ rows }) => (
  <svg width="19" height="16" viewBox="0 0 19 16">
    {rows.map(([c, y, w], i) => (
      <rect key={i} x="1" y={y} width={w} height="2" fill={c} />
    ))}
  </svg>
);

const TinyText = ({ children, className = '' }) => (
  <span className={`text-[15px] font-bold leading-none text-[#2060c0] ${className}`}>{children}</span>
);

const sideIcons = [
  <ArrowIcon key="l" />,
  <ArrowIcon key="u" rotate="rotate-90" />,
  <ArrowIcon key="d" rotate="-rotate-90" />,
  <IconBox key="a"><Bars rows={[['#e02020', 1, 17], ['#20a040', 5, 12], ['#2040c0', 9, 10], ['#e02020', 13, 8]]} /></IconBox>,
  <IconBox key="b"><svg width="20" height="16" viewBox="0 0 20 16">{[1, 5, 9, 13, 17].map((x) => <path key={x} d={`M${x} 1 v14`} stroke={x % 3 ? '#2040c0' : '#e02020'} strokeWidth="2.5" strokeDasharray="2 1" />)}</svg></IconBox>,
  <IconBox key="c"><svg width="21" height="16" viewBox="0 0 21 16"><path d="M1 13 L7 9 L11 11 L20 4" fill="none" stroke="#e02020" strokeWidth="1.5" /></svg></IconBox>,
  <IconBox key="d2"><svg width="21" height="16" viewBox="0 0 21 16"><path d="M4 2v12M11 1v12M17 3v9" stroke="#208030" /><rect x="2" y="5" width="4" height="5" fill="#20a040" /><rect x="9" y="3" width="4" height="6" fill="#e02020" /><rect x="15" y="5" width="4" height="5" fill="#e02020" /></svg></IconBox>,
  <svg key="e" width="26" height="22" viewBox="0 0 26 22"><rect x="7" y="1" width="18" height="14" fill="#eef4ff" stroke="#5090f0" /><rect x="1" y="6" width="18" height="14" fill="#fff" stroke="#5090f0" strokeWidth="2" /><path d="M4 11 h12 M4 15 h12" stroke="#555" strokeWidth="2" /></svg>,
  <IconBox key="f"><TinyText>F10</TinyText></IconBox>,
  <IconBox key="g"><svg width="20" height="17" viewBox="0 0 20 17"><path d="M2 3 h8 M4 3 v11 h8 M4 8 h8" fill="none" stroke="#c09020" /><rect x="1" y="1" width="7" height="4" fill="#f0c020" /><rect x="11" y="6" width="7" height="4" fill="#f0c020" /><rect x="11" y="12" width="7" height="4" fill="#f0c020" /></svg></IconBox>,
  <IconBox key="h"><svg width="16" height="17" viewBox="0 0 16 17"><rect x="2" y="2" width="12" height="13" fill="#f0a060" stroke="#e06020" /><path d="M5 6 h6 M5 9 h6 M5 12 h6" stroke="#fff" /></svg></IconBox>,
  <IconBox key="i"><TinyText>F12</TinyText></IconBox>,
  <IconBox key="j"><TinyText className="italic">f(x)</TinyText></IconBox>,
  <IconBox key="k"><div className="h-[11px] w-[17px] rounded-full border-2 border-[#3070c0]" /></IconBox>,
];

const sideIconsTwo = [
  <IconBox key="a"><svg width="21" height="14" viewBox="0 0 21 14"><path d="M1 4 q3 -3 5 0 t5 0 t5 0 t4 0" fill="none" stroke="#e02020" /><path d="M1 10 q3 -3 5 0 t5 0 t5 0 t4 0" fill="none" stroke="#2040c0" /></svg></IconBox>,
  <span key="b" className="text-[15px] font-bold text-[#2850c8]">RSI</span>,
  <svg key="c" width="22" height="24" viewBox="0 0 22 24"><path d="M18 6 C14 2 5 3 5 8 C5 13 17 11 17 16 C17 20 8 21 4 17" fill="none" stroke="#d82020" strokeWidth="4" /><path d="M11 1 v22" stroke="#808080" strokeWidth="1.5" /></svg>,
  <svg key="d" width="26" height="24" viewBox="0 0 26 24"><path d="M13 1 l5 5 h-3 v4 h4 v-3 l6 5 l-6 5 v-3 h-4 v4 h3 l-5 5 l-5 -5 h3 v-4 h-4 v3 l-6 -5 l6 -5 v3 h4 v-4 h-3 z" fill="#1848c0" /></svg>,
  <svg key="e" width="24" height="24" viewBox="0 0 24 24"><path d="M3 21 l2 -6 L18 2 l4 4 L9 19 Z" fill="#f0b030" stroke="#b07010" /><path d="M3 21 l2 -6 l4 4 Z" fill="#555" /></svg>,
];

const SideBar = () => (
  <div className="flex w-[38px] shrink-0 flex-col items-center bg-[#ececec]">
    {sideIcons.map((ic, i) => (
      <div key={i} className={`flex w-full items-center justify-center ${i === 0 ? 'h-[30px]' : 'h-[34.8px]'}`}>{ic}</div>
    ))}
    <div className="mb-[6px] mt-[5px] h-px w-[28px] bg-[#b0b0b0]" />
    {sideIconsTwo.map((ic, i) => (
      <div key={i} className="flex h-[34.8px] w-full items-center justify-center">{ic}</div>
    ))}
    <div className="mb-[5px] mt-[5px] h-px w-[28px] bg-[#b0b0b0]" />
    <div className="flex h-[34.6px] w-full items-center justify-center"><IconBox><TinyText>F5</TinyText></IconBox></div>
    <div className="flex h-[34.6px] w-full items-center justify-center">
      <IconBox><svg width="20" height="16" viewBox="0 0 20 16"><path d="M3 8 a7 6 0 0 1 13 -3 M17 8 a7 6 0 0 1 -13 3" fill="none" stroke="#50b840" strokeWidth="3" /></svg></IconBox>
    </div>
    {['1', '5', '15', '30', '60'].map((n) => (
      <div key={n} className="flex h-[34.5px] w-full items-center justify-center text-[15px] font-medium text-[#2040a0]">{n}</div>
    ))}
    <div className="flex h-[34.5px] w-[34px] items-center justify-center border-l-2 border-t-2 border-[#c8c8c8] bg-[#f8f8f8] text-[17px] text-[#2040a0]">日</div>
    {['周', '月', 'N', '多', '季', '年'].map((n) => (
      <div key={n} className="flex h-[34.4px] w-full items-center justify-center text-[17px] text-[#2040a0]">{n}</div>
    ))}
  </div>
);

const indexes = [
  ['上证', '3054.64', '16.41', '0.54%', '4059'],
  ['深证', '9612.75', '57.33', '0.60%', '5386'],
  ['中小', '5900.43', '30.85', '0.53%', '572.0'],
];

const StatusBar = () => (
  <div className="flex h-[37px] items-center bg-[#f2f2f2] pl-[3px] pt-[2px] text-[21px]">
    <div className="flex h-[21px] w-[19px] items-center justify-center rounded-[3px] border border-[#c09020] bg-[#f8d060]">
      <div className="h-[9px] w-[11px] border border-[#a07010] bg-[#fff0b0]" />
    </div>
    {indexes.map(([n, a, b, c, d], i) => (
      <div key={n} className={`flex items-center whitespace-nowrap ${i === 0 ? 'ml-[3px]' : i === 1 ? 'ml-[26px]' : 'ml-[30px]'}`}>
        <span className="w-[53px] text-[24px] leading-none text-[#444]">{n}</span>
        <span className="w-[101px] font-bold text-[#f01010]">{a}</span>
        <span className="w-[74px] font-bold text-[#f01010]">{b}</span>
        <span className="w-[86px] font-bold text-[#f01010]">{c}</span>
        <span className="font-bold text-[#111]">{d}</span>
        <span className="text-[24px] leading-none text-[#444]">亿</span>
      </div>
    ))}
    <div className="ml-[21px] h-full border-l border-[#c0c0c0] pl-[17px] pt-[7px]">
      <div className="flex gap-px">
        <div className="h-[8px] w-[21px] bg-[#f01010]" />
        <div className="h-[8px] w-[8px] bg-[#108030]" />
      </div>
      <div className="mt-[3px] h-[5px] w-[75px] bg-[repeating-linear-gradient(90deg,#f01010_0,#f01010_10px,#f2f2f2_10px,#f2f2f2_12px)]" />
    </div>
  </div>
);

const Watermark = () => (
  <div className="absolute bottom-0 right-0 flex h-[81px] w-[800px] items-center bg-[#7ea9d9]/97">
    <span className="ml-[16px] shrink-0 whitespace-nowrap text-[56px] font-black leading-none text-[#1a0a90]">公式指标网</span>
    <svg className="ml-[23px] shrink-0" width="82" height="78" viewBox="0 0 82 78">
      <path d="M7 37 A34 34 0 0 1 75 37" fill="none" stroke="#d8654c" strokeWidth="8" />
      <path d="M7 43 A34 34 0 0 0 75 43" fill="none" stroke="#e8c84c" strokeWidth="8" />
      <path d="M34 3 h14 l-3 14 h12 v40 l-10 17 h-12 l-10 -17 v-40 h12 z" fill="#e8c84c" />
      <path d="M31 26 h20 M31 36 h20 M31 46 h20 M41 20 v40" stroke="#b88820" strokeWidth="2.5" />
    </svg>
    <span className="ml-[27px] shrink-0 whitespace-nowrap font-['DejaVu_Serif',serif] text-[54px] font-bold leading-none tracking-[-1.5px] text-white">www.9m8.cn</span>
  </div>
);

export default function App() {
  return (
    <div className="relative flex h-[1395px] w-[2160px] flex-col overflow-hidden bg-black font-['Liberation_Sans','Noto_Sans_CJK_SC',sans-serif]">
      <TitleBar />
      <div className="flex h-[1323px] overflow-hidden">
        <div className="w-[1787px] shrink-0">
          <ToolBar />
          <InfoRow />
          <PriceChart />
          <div className="h-[2px] bg-[#b00000]" />
          <div className="flex h-[24px] items-center whitespace-nowrap pl-[3px] text-[18px] text-[#c8c8c8]">
            <span className="mr-[6px] flex h-[18px] w-[18px] items-center justify-center rounded-full bg-[#777] text-[12px] text-[#222]">⌄</span>
            <span>VOLUME: 209450.41</span>
            <span className="ml-[5px]">MA5: 148242.83</span>
            <span className="ml-[7px] text-[#e8e800]">MA10: 86840.01</span>
          </div>
          <VolumeChart />
          <DateStrip />
          <TabRow className="h-[26px] pt-[2px]" items={tabsOne} extra={<div className="ml-[711px] flex h-full w-[45px] items-center justify-center border-x border-[#a00000] whitespace-nowrap">连版</div>} />
          <TabRow className="h-[27px] pt-[3px]" items={tabsTwo} />
        </div>
        <QuotePanel />
        <SideBar />
      </div>
      <StatusBar />
      <Watermark />
    </div>
  );
}
